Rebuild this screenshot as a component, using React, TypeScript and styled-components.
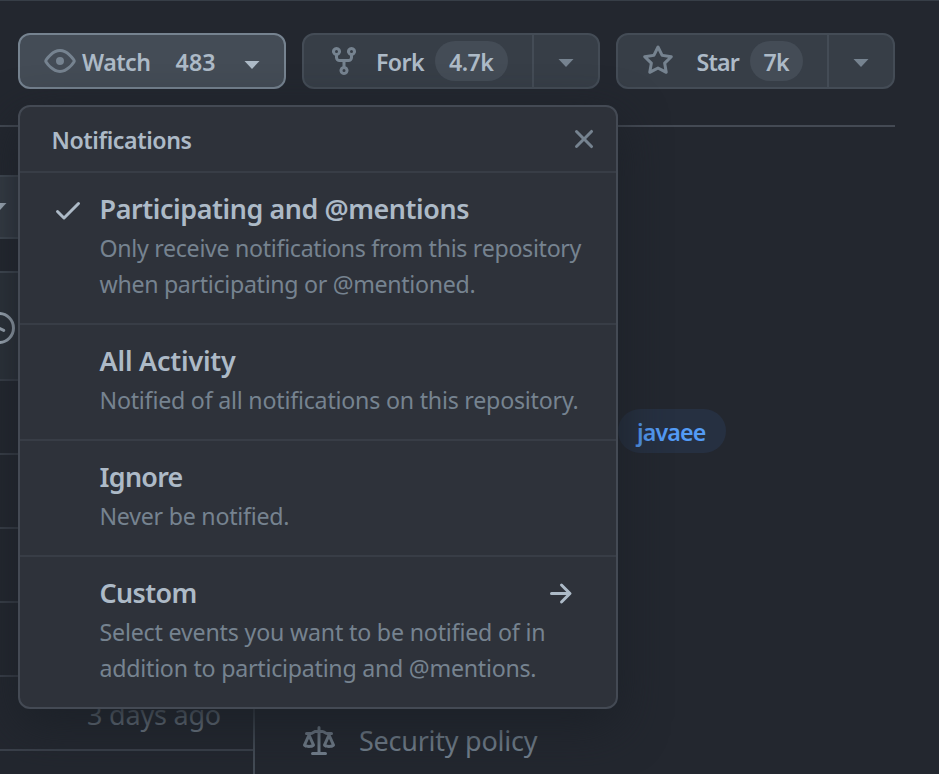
import React from "react";
import styled, { createGlobalStyle } from "styled-components";

const GlobalStyle = createGlobalStyle`
  *, *::before, *::after { box-sizing: border-box; }
  html, body { margin: 0; background: #23272f; }
  body {
    font-family: "Noto Sans", "Open Sans", sans-serif;
    font-size: 23.2px;
    line-height: 36px;
    color: #adbac7;
    overflow: hidden;
  }
  h2, h3, p { margin: 0; }
`;

const Page = styled.main`
  position: relative;
  display: flex;
  flex-direction: column;
  width: 939px;
  height: 774px;
  overflow: hidden;
  border-top: 1px solid #373e47;
  background: #23272f;
`;

const Toolbar = styled.header`
  display: flex;
  flex: none;
  gap: 16px;
  width: 895px;
  height: 126px;
  padding: 32px 0 0 18px;
  border-bottom: 2px solid #444a54;
`;

const ButtonGroup = styled.div<{ $width: number; $active?: boolean }>`
  display: flex;
  width: ${(p) => p.$width}px;
  height: 56px;
  border: 2px solid ${(p) => (p.$active ? "#768390" : "#444c56")};
  border-radius: 12px;
  background: ${(p) => (p.$active ? "#444c56" : "#373e47")};
`;

const ActionButton = styled.button<{ $padding: number }>`
  display: flex;
  flex: 1;
  align-items: center;
  padding: 0 0 0 ${(p) => p.$padding}px;
  border: 0;
  background: none;
  color: inherit;
  font: inherit;
  font-weight: 600;
  white-space: nowrap;
`;

const CaretButton = styled.button`
  display: flex;
  align-items: center;
  justify-content: center;
  width: 66px;
  padding: 3px 0 0;
  border: 0;
  border-left: 2px solid #444c56;
  background: none;
  color: #768390;
`;

const Label = styled.span<{ $track?: number; $start?: number }>`
  margin-left: ${(p) => p.$start ?? 0}px;
  padding-top: 2px;
  letter-spacing: ${(p) => p.$track ?? 0}px;
`;

const Counter = styled.span<{ $width: number; $start: number; $track: number }>`
  display: flex;
  justify-content: center;
  width: ${(p) => p.$width}px;
  height: 40px;
  margin-left: ${(p) => p.$start}px;
  padding: 3px 1px 0 0;
  border-radius: 20px;
  background: #444c56;
  letter-spacing: ${(p) => p.$track}px;
`;

const Glyph = styled.svg<{ $color?: string }>`
  flex: none;
  display: block;
  color: ${(p) => p.$color ?? "#768390"};
  fill: currentColor;
`;

const WatchCaret = styled.span`
  display: flex;
  margin: 8px 0 0 28px;
`;

const Columns = styled.div`
  display: flex;
  flex: 1;
  min-height: 0;
`;

const FilesColumn = styled.section`
  display: flex;
  flex-direction: column;
  width: 255px;
  padding-top: 48px;
`;

const BranchButton = styled.div`
  display: flex;
  flex: none;
  height: 64px;
  width: 120px;
  padding-top: 26px;
  border: 2px solid #444c56;
  border-left: 0;
  border-radius: 0 12px 12px 0;
  background: #373e47;

  svg { margin-left: -9px; }
`;

const FileTable = styled.div`
  flex: 1;
  min-height: 0;
  margin-top: 32px;
  border: 2px solid #444c56;
  border-width: 2px 2px 0 0;
  border-radius: 0 12px 0 0;
`;

const CommitRow = styled.div`
  display: flex;
  align-items: center;
  height: 106px;
  padding-top: 4px;
  background: #2d333b;

  svg { margin-left: -17px; }
`;

const FileRow = styled.div`
  display: flex;
  align-items: center;
  justify-content: flex-end;
  height: 74px;
  padding: 4px 32px 0 0;
  border-top: 2px solid #3b414b;
  color: #7d8a97;
  font-size: 27px;
  letter-spacing: -0.2px;
`;

const AboutColumn = styled.aside`
  display: flex;
  flex: 1;
  flex-direction: column;
  align-items: flex-start;
  padding: 282px 0 0 48px;
`;

const Topic = styled.a`
  display: flex;
  align-items: center;
  width: 108px;
  height: 44px;
  margin-left: 315px;
  padding: 2px 0 0 19px;
  border-radius: 22px;
  background: rgba(65, 132, 228, 0.1);
  color: #539bf5;
  font-weight: 600;
  letter-spacing: -0.85px;
`;

const PolicyLink = styled.a`
  display: flex;
  align-items: flex-start;
  gap: 24px;
  margin-top: 273px;
  color: #768390;
  font-size: 27px;
  line-height: 30px;
  letter-spacing: -0.25px;
`;

const Popover = styled.div`
  position: absolute;
  left: 18px;
  top: 104px;
  width: 600px;
  border: 2px solid #444a54;
  border-radius: 12px;
  background: #2e323a;
  box-shadow: 0 16px 48px #1c2128;
`;

const PopoverHeader = styled.div`
  display: flex;
  align-items: center;
  justify-content: space-between;
  height: 64px;
  padding: 0 16px 0 31.5px;
`;

const PopoverTitle = styled.h2`
  padding-top: 1px;
  font-size: 23.2px;
  font-weight: 600;
  letter-spacing: -0.42px;
`;

const Option = styled.div`
  display: flex;
  align-items: flex-start;
  padding: 18px 28px 21px 32px;
  border-top: 2px solid #383d46;
`;

const CheckSlot = styled.div`
  flex: none;
  width: 48px;
  padding-top: 3px;
`;

const OptionBody = styled.div`
  flex: 1;
`;

const OptionHeading = styled.div`
  display: flex;
  align-items: center;
  justify-content: space-between;
  height: 36px;
  margin-bottom: 3px;
  padding-right: 12px;

  svg { margin-top: 2px; }
`;

const OptionTitle = styled.h3<{ $track: number }>`
  margin-left: -0.4px;
  font-size: 26.9px;
  font-weight: 600;
  letter-spacing: ${(p) => p.$track}px;
`;

const DescriptionLine = styled.p<{ $track: number }>`
  color: #768390;
  letter-spacing: ${(p) => p.$track}px;
  margin-left: -0.5px;
  white-space: nowrap;
`;

const paths = {
  eye: "M1.679 7.932c.412-.621 1.242-1.75 2.366-2.717C5.175 4.242 6.527 3.5 8 3.5c1.473 0 2.824.742 3.955 1.715 1.124.967 1.954 2.096 2.366 2.717a.119.119 0 010 .136c-.412.621-1.242 1.75-2.366 2.717C10.825 11.758 9.473 12.5 8 12.5c-1.473 0-2.824-.742-3.955-1.715C2.92 9.818 2.09 8.69 1.679 8.068a.119.119 0 010-.136zM8 2c-1.981 0-3.67.992-4.933 2.078C1.797 5.169.88 6.423.43 7.1a1.619 1.619 0 000 1.798c.45.678 1.367 1.932 2.637 3.024C4.329 13.008 6.019 14 8 14c1.981 0 3.67-.992 4.933-2.078 1.27-1.091 2.187-2.345 2.637-3.023a1.619 1.619 0 000-1.798c-.45-.678-1.367-1.932-2.637-3.023C11.671 2.992 9.981 2 8 2zm0 8a2 2 0 100-4 2 2 0 000 4z",
  fork: "M5 3.25a.75.75 0 11-1.5 0 .75.75 0 011.5 0zm0 2.122a2.25 2.25 0 10-1.5 0v.878A2.25 2.25 0 005.75 8.5h1.5v2.128a2.251 2.251 0 101.5 0V8.5h1.5a2.25 2.25 0 002.25-2.25v-.878a2.25 2.25 0 10-1.5 0v.878a.75.75 0 01-.75.75h-4.5A.75.75 0 015 6.25v-.878zm3.75 7.378a.75.75 0 11-1.5 0 .75.75 0 011.5 0zm3-8.75a.75.75 0 100-1.5.75.75 0 000 1.5z",
  star: "M8 .25a.75.75 0 01.673.418l1.882 3.815 4.21.612a.75.75 0 01.416 1.279l-3.046 2.97.719 4.192a.75.75 0 01-1.088.791L8 12.347l-3.766 1.98a.75.75 0 01-1.088-.79l.72-4.194L.818 6.374a.75.75 0 01.416-1.28l4.21-.611L7.327.668A.75.75 0 018 .25zm0 2.445L6.615 5.5a.75.75 0 01-.564.41l-3.097.45 2.24 2.184a.75.75 0 01.216.664l-.528 3.084 2.769-1.456a.75.75 0 01.698 0l2.77 1.456-.53-3.084a.75.75 0 01.216-.664l2.24-2.183-3.096-.45a.75.75 0 01-.564-.41L8 2.694v.001z",
  check: "M13.78 4.22a.75.75 0 010 1.06l-7.25 7.25a.75.75 0 01-1.06 0L2.22 9.28a.75.75 0 011.06-1.06L6 10.94l6.72-6.72a.75.75 0 011.06 0z",
  close: "M3.72 3.72a.75.75 0 011.06 0L8 6.94l3.22-3.22a.75.75 0 111.06 1.06L9.06 8l3.22 3.22a.75.75 0 11-1.06 1.06L8 9.06l-3.22 3.22a.75.75 0 01-1.06-1.06L6.94 8 3.72 4.78a.75.75 0 010-1.06z",
  arrow: "M8.22 2.97a.75.75 0 011.06 0l4.25 4.25a.75.75 0 010 1.06l-4.25 4.25a.75.75 0 01-1.06-1.06l2.97-2.97H3.75a.75.75 0 010-1.5h7.44L8.22 4.03a.75.75 0 010-1.06z",
  law: "M8.75.75a.75.75 0 00-1.5 0V2h-.984c-.305 0-.604.08-.869.23l-1.288.737A.25.25 0 013.984 3H1.75a.75.75 0 000 1.5h.428L.066 9.192a.75.75 0 00.154.838c.1.1.5.97 2.78.97s2.68-.87 2.78-.97a.75.75 0 00.154-.838L3.822 4.5h.162c.305 0 .604-.08.869-.23l1.289-.737a.25.25 0 01.124-.033h.984V13h-2.5a.75.75 0 000 1.5h6.5a.75.75 0 000-1.5h-2.5V3.5h.984a.25.25 0 01.124.033l1.29.736c.264.152.563.231.868.231h.162l-2.112 4.692a.75.75 0 00.154.838c.1.1.5.97 2.78.97s2.68-.87 2.78-.97a.75.75 0 00.154-.838L13.823 4.5h.427a.75.75 0 000-1.5h-2.234a.25.25 0 01-.124-.033l-1.29-.736A1.75 1.75 0 009.735 2H8.75V.75zM1.695 9.227c.285.135.718.273 1.305.273s1.02-.138 1.305-.273L3 6.327l-1.305 2.9zm10 0c.285.135.718.273 1.305.273s1.02-.138 1.305-.273L13 6.327l-1.305 2.9z",
};

function Icon({ name, color }: { name: keyof typeof paths; color?: string }) {
  return (
    <Glyph width="32" height="32" viewBox="0 0 16 16" $color={color} aria-hidden="true">
      <path fillRule="evenodd" d={paths[name]} />
    </Glyph>
  );
}

function Caret({ color }: { color?: string }) {
  return (
    <Glyph width="16" height="8" viewBox="0 0 16 8" $color={color} aria-hidden="true">
      <path d="M.5 0h15L8 8z" />
    </Glyph>
  );
}

function Clock() {
  return (
    <Glyph width="32" height="32" viewBox="0 0 16 16" $color="#adbac7" aria-hidden="true">
      <circle cx="8" cy="8" r="7.25" fill="none" stroke="currentColor" strokeWidth="1.5" />
      <path d="M7.75 4.5V8l2.6 1.2" fill="none" stroke="currentColor" strokeWidth="1.5" strokeLinecap="round" />
    </Glyph>
  );
}

type OptionData = {
  title: string;
  track: number;
  lines: [string, number][];
  selected?: boolean;
  arrow?: boolean;
};

const options: OptionData[] = [
  {
    title: "Participating and @mentions",
    track: -0.42,
    selected: true,
    lines: [
      ["Only receive notifications from this repository", -0.31],
      ["when participating or @mentioned.", -0.32],
    ],
  },
  {
    title: "All Activity",
    track: -0.2,
    lines: [["Notified of all notifications on this repository.", -0.22]],
  },
  { title: "Ignore", track: -0.75, lines: [["Never be notified.", -0.25]] },
  {
    title: "Custom",
    track: -0.65,
    arrow: true,
    lines: [
      ["Select events you want to be notified of in", -0.19],
      ["addition to participating and @mentions.", -0.25],
    ],
  },
];

export default function App() {
  return (
    <>
      <GlobalStyle />
      <Page>
        <Toolbar>
          <ButtonGroup $width={268} $active>
            <ActionButton $padding={24}>
              <Icon name="eye" />
              <Label $start={6} $track={-0.5}>Watch</Label>
              <Label $start={25} $track={0.1}>483</Label>
              <WatchCaret><Caret color="#adbac7" /></WatchCaret>
            </ActionButton>
          </ButtonGroup>
          <ButtonGroup $width={298}>
            <ActionButton $padding={24}>
              <Icon name="fork" />
              <Label $start={16} $track={-0.6}>Fork</Label>
              <Counter $width={73} $start={11} $track={-0.6}>4.7k</Counter>
            </ActionButton>
            <CaretButton aria-label="Fork options"><Caret /></CaretButton>
          </ButtonGroup>
          <ButtonGroup $width={279}>
            <ActionButton $padding={24}>
              <Icon name="star" />
              <Label $start={22.5} $track={-0.8}>Star</Label>
              <Counter $width={53} $start={11} $track={-0.9}>7k</Counter>
            </ActionButton>
            <CaretButton aria-label="Star options"><Caret /></CaretButton>
          </ButtonGroup>
        </Toolbar>

        <Columns>
          <FilesColumn>
            <BranchButton><Caret color="#adbac7" /></BranchButton>
            <FileTable>
              <CommitRow><Clock /></CommitRow>
              <FileRow />
              <FileRow />
              <FileRow />
              <FileRow />
              <FileRow>3 days ago</FileRow>
              <FileRow />
            </FileTable>
          </FilesColumn>
          <AboutColumn>
            <Topic>javaee</Topic>
            <PolicyLink>
              <Icon name="law" />
              <span>Security policy</span>
            </PolicyLink>
          </AboutColumn>
        </Columns>

        <Popover role="dialog">
          <PopoverHeader>
            <PopoverTitle>Notifications</PopoverTitle>
            <Icon name="close" />
          </PopoverHeader>
          {options.map((option) => (
            <Option key={option.title}>
              <CheckSlot>{option.selected && <Icon name="check" color="#adbac7" />}</CheckSlot>
              <OptionBody>
                <OptionHeading>
                  <OptionTitle $track={option.track}>{option.title}</OptionTitle>
                  {option.arrow && <Icon name="arrow" color="#adbac7" />}
                </OptionHeading>
                {option.lines.map(([text, track]) => (
                  <DescriptionLine key={text} $track={track}>{text}</DescriptionLine>
                ))}
              </OptionBody>
            </Option>
          ))}
        </Popover>
      </Page>
    </>
  );
}
